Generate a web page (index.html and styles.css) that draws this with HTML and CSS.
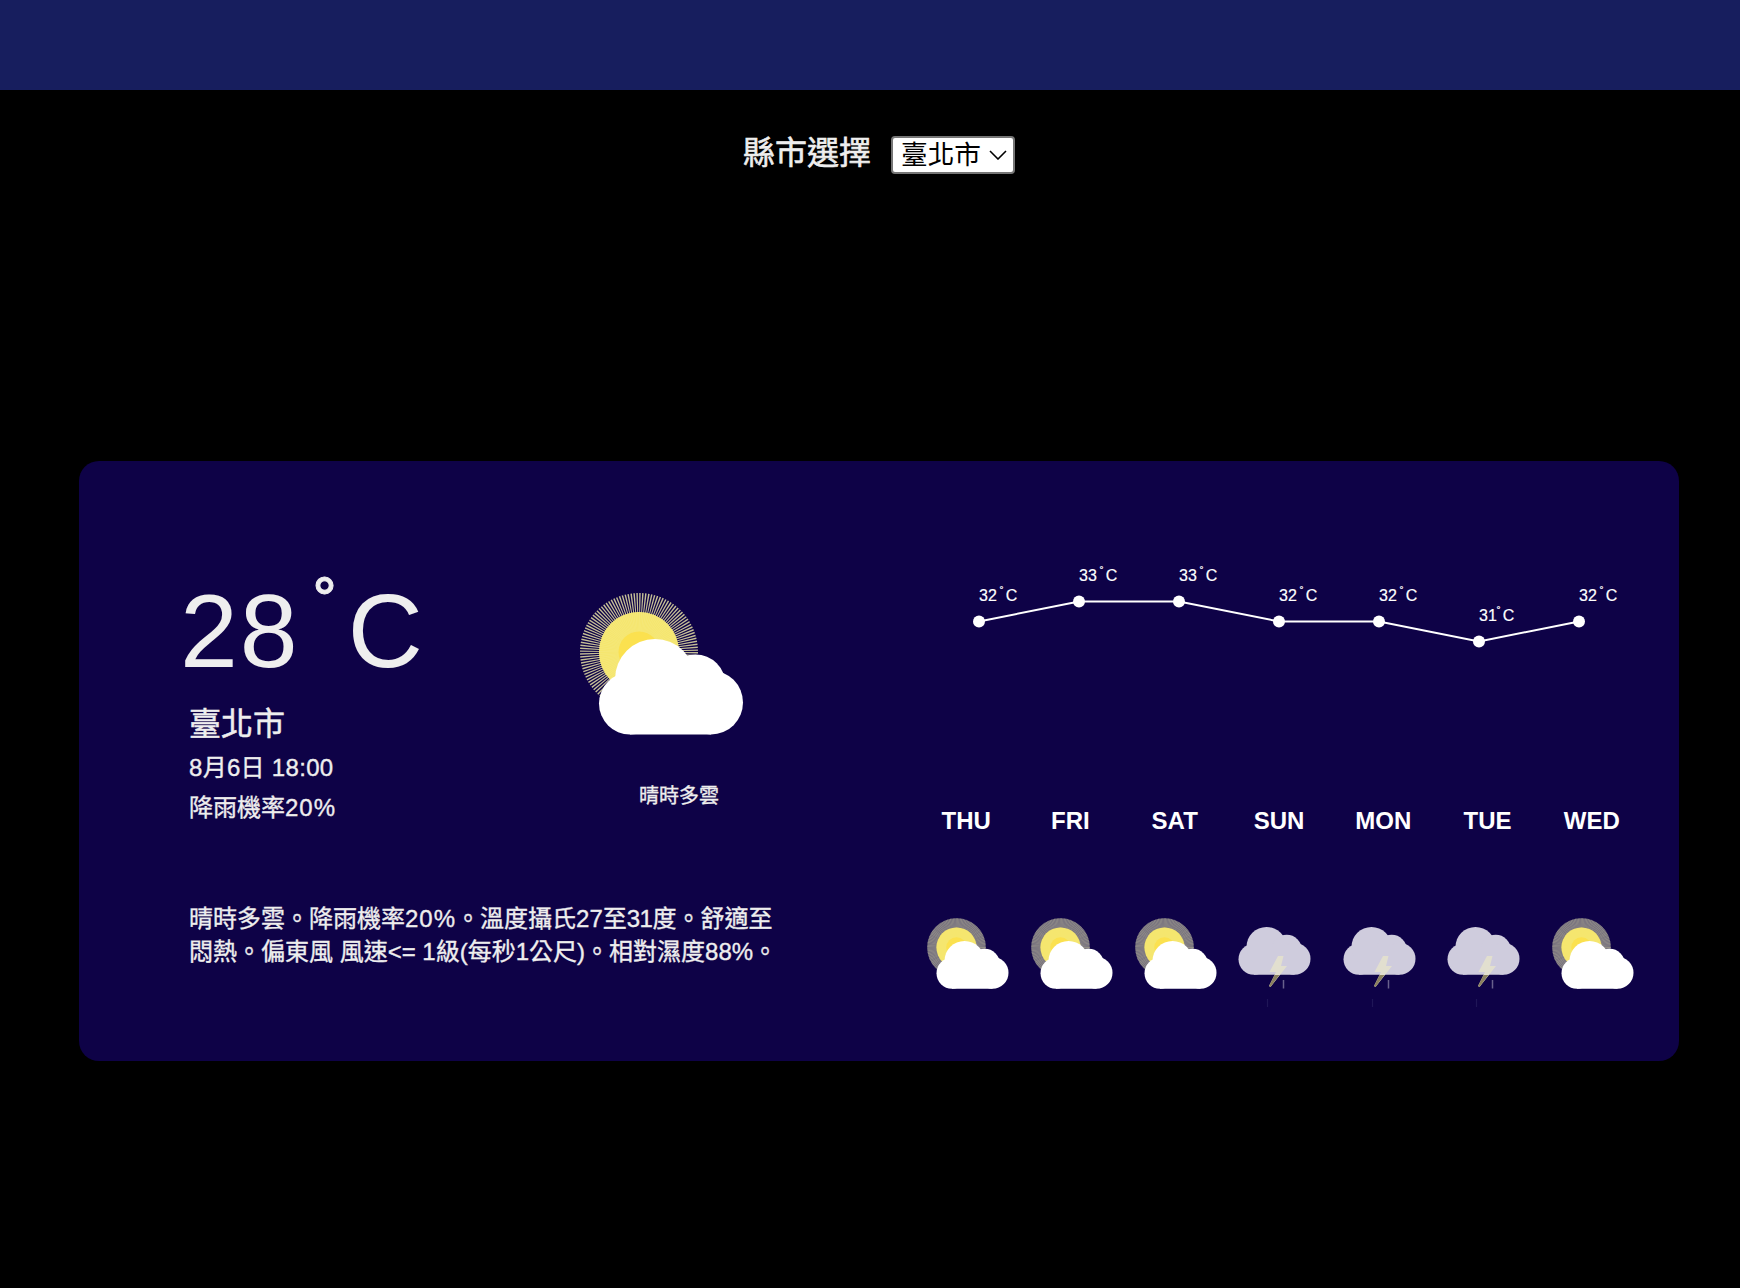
FILE: index.html
```html
<!DOCTYPE html>
<html lang="zh-Hant">
<head>
<meta charset="utf-8">
<title>天氣預報</title>
<link rel="stylesheet" href="styles.css">
</head>
<body>
<svg class="defs" aria-hidden="true">
  <symbol id="cloud" viewBox="0 0 144 96" overflow="visible">
    <circle cx="31" cy="64.500" r="31"/>
    <circle cx="56" cy="40" r="40"/>
    <circle cx="96.500" cy="45.500" r="30"/>
    <circle cx="112" cy="63.500" r="32"/>
    <path d="M31 40H112V95.500H31Z"/>
  </symbol>
  <symbol id="partly" viewBox="0 0 164 144" overflow="visible">
    <circle cx="59" cy="59" r="49" fill="none" class="haze" stroke="#6f6a7c" stroke-width="19"/>
    <circle cx="59" cy="59" r="40" fill="#f5e66c"/>
    <circle class="rays" cx="59" cy="59" r="39.500" fill="none" stroke="#f3edaa" stroke-width="39" stroke-dasharray="1 1"/>
    <circle cx="59" cy="59" r="40" fill="#f5e66c" fill-opacity=".7"/>
    <circle cx="59" cy="59" r="20.500" fill="#fbe14f"/>
    <use href="#cloud" x="19" y="46" width="144" height="96" fill="#fff"/>
  </symbol>
  <symbol id="storm" viewBox="0 0 164 144" overflow="visible">
    <use href="#cloud" x="19" y="18" width="144" height="96" fill="#cfccdd"/>
    <path d="M98 76L81 108H94L80 136L83 138L116 96H104L109 76Z" fill="#e2dfcf"/>
    <path d="M91 114H101L83 138L80 136Z" fill="#8b815f"/>
    <path d="M109 124V141" stroke="#68618c" stroke-width="3"/>
    <path d="M77 162V178" stroke="#1f1657" stroke-width="2.500"/>
  </symbol>
</svg>
<header class="topbar"></header>
<main>
  <div class="picker">
    <label for="city">縣市選擇</label>
    <div class="select-box">
      <select id="city"><option>臺北市</option></select>
      <svg class="chevron" viewBox="0 0 18 10"><path d="M1 1L9 9L17 1"/></svg>
    </div>
  </div>
  <section class="card">
    <div class="today">
      <div class="summary">
        <div class="now">
          <div class="temp"><span class="value">28</span><span class="deg">˚</span>C</div>
          <div class="city">臺北市</div>
          <div class="line date">8月6日 18:00</div>
          <div class="line">降雨機率<span class="wide">20%</span></div>
        </div>
        <div class="condition">
          <svg class="main-icon"><use href="#partly"/></svg>
          <div class="caption">晴時多雲</div>
        </div>
      </div>
      <p class="description">晴時多雲。降雨機率<span class="wide">20%</span>。溫度攝氏27至<span class="tight">31</span>度。舒適至<br>悶熱。偏東風 風速&lt;= 1級(每秒1公尺)。相對濕度88%。</p>
    </div>
    <div class="week">
      <svg class="chart" viewBox="0 0 730 120">
        <polyline points="65,71.500 165,51.500 265,51.500 365,71.500 465,71.500 565,91.500 665,71.500"/>
        <g class="dots">
          <circle cx="65" cy="71.500" r="6"/><circle cx="165" cy="51.500" r="6"/><circle cx="265" cy="51.500" r="6"/><circle cx="365" cy="71.500" r="6"/><circle cx="465" cy="71.500" r="6"/><circle cx="565" cy="91.500" r="6"/><circle cx="665" cy="71.500" r="6"/>
        </g>
        <g class="labels">
          <text x="65" y="51">32<tspan class="ring" dx="3" dy="-5">˚</tspan><tspan dx="2" dy="5">C</tspan></text>
          <text x="165" y="31">33<tspan class="ring" dx="3" dy="-5">˚</tspan><tspan dx="2" dy="5">C</tspan></text>
          <text x="265" y="31">33<tspan class="ring" dx="3" dy="-5">˚</tspan><tspan dx="2" dy="5">C</tspan></text>
          <text x="365" y="51">32<tspan class="ring" dx="3" dy="-5">˚</tspan><tspan dx="2" dy="5">C</tspan></text>
          <text x="465" y="51">32<tspan class="ring" dx="3" dy="-5">˚</tspan><tspan dx="2" dy="5">C</tspan></text>
          <text x="565" y="71">31<tspan class="ring" dx="0" dy="-5">˚</tspan><tspan dx="2" dy="5">C</tspan></text>
          <text x="665" y="51">32<tspan class="ring" dx="3" dy="-5">˚</tspan><tspan dx="2" dy="5">C</tspan></text>
        </g>
      </svg>
      <div class="days">
        <div class="day"><b>THU</b><svg><use href="#partly"/></svg></div>
        <div class="day"><b>FRI</b><svg><use href="#partly"/></svg></div>
        <div class="day"><b>SAT</b><svg><use href="#partly"/></svg></div>
        <div class="day storm"><b>SUN</b><svg><use href="#storm"/></svg></div>
        <div class="day storm"><b>MON</b><svg><use href="#storm"/></svg></div>
        <div class="day storm"><b>TUE</b><svg><use href="#storm"/></svg></div>
        <div class="day"><b>WED</b><svg><use href="#partly"/></svg></div>
      </div>
    </div>
  </section>
</main>
</body>
</html>
```
FILE: styles.css
```css
* { box-sizing: border-box; }
body {
  margin: 0;
  min-height: 1288px;
  background: #000;
  color: #eee;
  font-family: "Liberation Sans", "Noto Sans CJK TC", sans-serif;
}
.defs { display: none; }
.topbar { height: 90px; background: #171e5e; }
main { padding: 0 61px 0 79px; }
.picker {
  display: flex;
  justify-content: center;
  gap: 20px;
  height: 371px;
  padding-top: 46px;
}
.picker label { font-size: 32px; line-height: 34px; height: 34px; -webkit-text-stroke: .6px; }
.select-box { display: grid; width: 124px; height: 38px; }
.select-box select {
  grid-area: 1 / 1;
  appearance: none;
  background: #fff;
  color: #000;
  border: 2px solid #767676;
  border-radius: 4px;
  padding: 0 8px;
  font: 26.67px "Liberation Sans", "Noto Sans CJK TC", sans-serif;
}
.chevron {
  grid-area: 1 / 1;
  align-self: center;
  justify-self: end;
  margin-right: 8px;
  width: 18px;
  height: 10px;
  fill: none;
  stroke: #000;
  stroke-width: 1.6;
  pointer-events: none;
}
.card {
  display: flex;
  width: 1600px;
  height: 600px;
  border-radius: 20px;
  background: #0e0247;
}
.today { width: 835px; padding: 114px 0 0 110px; }
.summary { display: flex; height: 322px; }
.now { width: 391px; }
.temp {
  margin-left: -9px;
  font-size: 104px;
  line-height: 112px;
  height: 128px;
  white-space: nowrap;
}
.value { letter-spacing: 2px; }
.deg {
  position: relative;
  top: -32px;
  display: inline-block;
  width: 48px;
  padding-left: 5px;
  text-align: center;
  font-size: 72px;
  line-height: 1;
  -webkit-text-stroke: 1px;
}
.city { font-size: 32px; line-height: 42px; height: 45px; -webkit-text-stroke: .5px; }
.line { font-size: 24px; line-height: 40px; }
.line, .description, .caption { -webkit-text-stroke: .35px; }
.date { letter-spacing: .3px; }
.wide { letter-spacing: 1px; }
.tight { letter-spacing: -.5px; }
.condition { width: 200px; }
.main-icon { display: block; width: 164px; height: 144px; margin: 17.5px 0 0; overflow: visible; }
.main-icon { --haze: 0; --rays: .8; }
.haze { opacity: var(--haze, 1); }
.rays { stroke-opacity: var(--rays, .3); }
.caption { margin: 43.500px 0 0 59px; font-size: 20px; line-height: 32px; }
.description { margin: 5px 0 0; font-size: 24px; line-height: 33px; white-space: nowrap; }
.week { width: 730px; color: #fff; padding-top: 89px; }
.chart { display: block; width: 730px; height: 120px; overflow: visible; }
.chart polyline { fill: none; stroke: #fff; stroke-width: 2; }
.dots, .labels { fill: #fff; }
.labels { font-size: 16px; stroke: #fff; stroke-width: .2px; }
.ring { font-size: 12px; }
.days { display: grid; grid-template-columns: repeat(7, 1fr); padding-top: 133px; }
.day b { display: block; text-align: center; font-size: 24px; line-height: 36px; font-weight: 700; }
.day svg { display: block; width: 82px; height: 72px; margin: 78.500px 0 0 12.500px; overflow: visible; }
.storm svg { margin-left: 2.500px; }
```
